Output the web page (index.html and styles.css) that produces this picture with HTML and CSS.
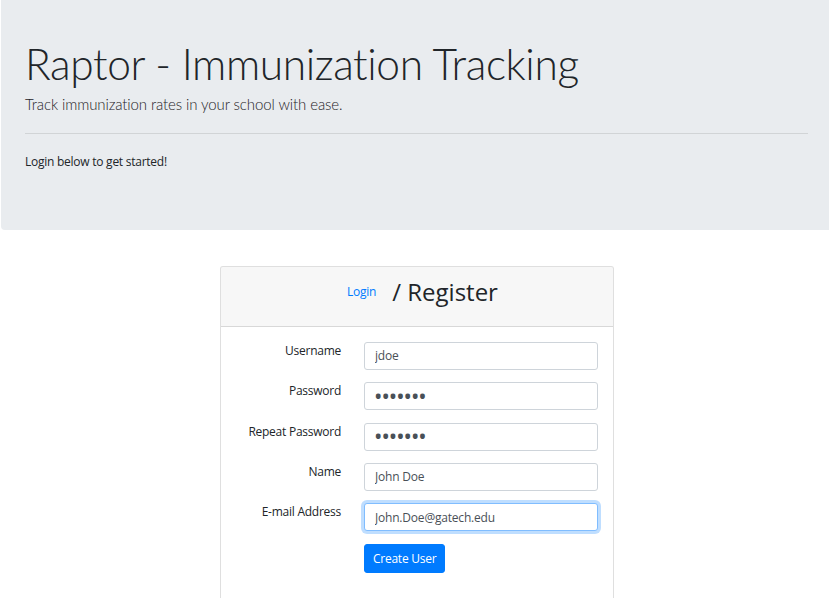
FILE: index.html
```html
<!DOCTYPE html>
<html lang="en">
<head>
<meta charset="utf-8">
<title>Raptor - Immunization Tracking</title>
<link rel="stylesheet" href="styles.css">
</head>
<body>
<header class="jumbotron">
  <h1 class="display">Raptor - Immunization Tracking</h1>
  <p class="lead">Track immunization rates in your school with ease.</p>
  <hr class="divider">
  <p class="intro">Login below to get started!</p>
</header>
<main class="wrap">
  <section class="card">
    <div class="card-header">
      <a class="switch-link" href="#">Login</a>
      <h3 class="card-title">/ Register</h3>
    </div>
    <form class="card-body">
      <label class="form-label" for="username">Username</label>
      <input class="form-control" id="username" type="text" value="jdoe">
      <label class="form-label" for="password">Password</label>
      <input class="form-control pw" id="password" type="password" value="1234567">
      <label class="form-label" for="repeat">Repeat Password</label>
      <input class="form-control pw" id="repeat" type="password" value="1234567">
      <label class="form-label" for="name">Name</label>
      <input class="form-control" id="name" type="text" value="John Doe">
      <label class="form-label" for="email">E-mail Address</label>
      <input class="form-control focused" id="email" type="text" value="John.Doe@gatech.edu">
      <span></span>
      <div class="actions"><button class="btn-primary" type="button">Create User</button></div>
    </form>
  </section>
</main>
</body>
</html>
```

FILE: styles.css
```css
html, body {
  margin: 0;
  padding: 0;
  overflow: hidden;
  background: #fff;
}
body {
  font-family: "Open Sans", "Noto Sans", "Liberation Sans", sans-serif;
  color: #212529;
  font-size: 12px;
  letter-spacing: -0.25px;
  line-height: 1.5;
}
.jumbotron {
  margin: 0 -3px 0 1px;
  background: #e9ecef;
  border-radius: 0 0 4px 4px;
  padding: 38px 24px 59px;
}
.display {
  margin: 0;
  font-family: "Lato", "Open Sans", sans-serif;
  font-size: 42.5px;
  font-weight: 300;
  letter-spacing: -0.4px;
  line-height: 1.2;
}
.lead {
  margin: 4px 0 0;
  font-family: "Lato", "Open Sans", sans-serif;
  font-size: 15px;
  font-weight: 300;
  letter-spacing: -0.1px;
  line-height: 1.5;
  color: #1f2327;
}
.divider {
  margin: 17.5px 0 0;
  border: 0;
  border-top: 1px solid rgba(0,0,0,.1);
}
.intro {
  margin: 19px 0 0;
  font-size: 12px;
}
.wrap {
  display: flex;
  justify-content: center;
  padding-left: 5px;
  margin-top: 36px;
}
.card {
  width: 392px;
  border: 1px solid rgba(0,0,0,.125);
  border-radius: 3px;
  background: #fff;
}
.card-header {
  display: flex;
  justify-content: center;
  align-items: center;
  gap: 16px;
  padding: 11px 0 19px 11px;
  background: rgba(0,0,0,.03);
  border-bottom: 1px solid rgba(0,0,0,.125);
  border-radius: 3px 3px 0 0;
}
.switch-link {
  color: #007bff;
  text-decoration: none;
  font-size: 12px;
}
.card-title {
  margin: 0;
  font-size: 24px;
  font-weight: 400;
  letter-spacing: 0;
  line-height: 1.2;
}
.card-body {
  display: grid;
  grid-template-columns: 1fr 234px;
  column-gap: 23px;
  row-gap: 12.4px;
  padding: 15px 15px 40px 14px;
}
.form-label {
  text-align: right;
  font-size: 12px;
  line-height: 18px;
}
.form-control {
  box-sizing: border-box;
  height: 28px;
  width: 100%;
  margin: 0;
  padding: 0 10px;
  font-family: inherit;
  font-size: 12px;
  letter-spacing: -0.2px;
  color: #495057;
  background: #fff;
  border: 1px solid #ced4da;
  border-radius: 3px;
  outline: none;
}
.pw {
  font-size: 17px;
  font-weight: 700;
  letter-spacing: 1px;
}
.focused {
  border-color: #80bdff;
  box-shadow: 0 0 0 3px rgba(0,123,255,.25);
}
.btn-primary {
  height: 29px;
  padding: 0 8px;
  font-family: inherit;
  font-size: 12px;
  letter-spacing: -0.25px;
  color: #fff;
  background: #007bff;
  border: 1px solid #007bff;
  border-radius: 3px;
}
```
